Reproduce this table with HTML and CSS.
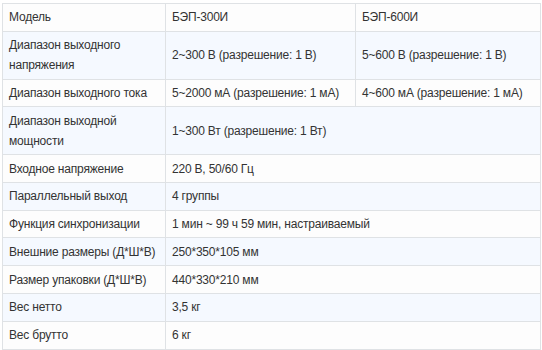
FILE: index.html
```html
<!DOCTYPE html>
<html lang="ru">
<head>
<meta charset="utf-8">
<link rel="stylesheet" href="styles.css">
</head>
<body>
<table class="spec">
  <colgroup>
    <col class="c1"><col class="c2"><col class="c3">
  </colgroup>
  <tbody>
    <tr><td>Модель</td><td>БЭП-300И</td><td>БЭП-600И</td></tr>
    <tr><td>Диапазон выходного напряжения</td><td>2~300 В (разрешение: 1 В)</td><td>5~600 В (разрешение: 1 В)</td></tr>
    <tr><td>Диапазон выходного тока</td><td>5~2000 мА (разрешение: 1 мА)</td><td>4~600 мА (разрешение: 1 мА)</td></tr>
    <tr><td>Диапазон выходной мощности</td><td colspan="2">1~300 Вт (разрешение: 1 Вт)</td></tr>
    <tr><td>Входное напряжение</td><td colspan="2">220 В, 50/60 Гц</td></tr>
    <tr><td>Параллельный выход</td><td colspan="2">4 группы</td></tr>
    <tr><td>Функция синхронизации</td><td colspan="2">1 мин ~ 99 ч 59 мин, настраиваемый</td></tr>
    <tr><td>Внешние размеры (Д*Ш*В)</td><td colspan="2">250*350*105 мм</td></tr>
    <tr><td>Размер упаковки (Д*Ш*В)</td><td colspan="2">440*330*210 мм</td></tr>
    <tr><td>Вес нетто</td><td colspan="2">3,5 кг</td></tr>
    <tr><td>Вес брутто</td><td colspan="2">6 кг</td></tr>
  </tbody>
</table>
</body>
</html>
```
FILE: styles.css
```css
html, body {
  margin: 0;
  padding: 0;
  background: #ffffff;
}
body {
  padding: 3px 2px 0 2px;
  font-family: "Liberation Sans", Arial, sans-serif;
  font-size: 12px;
  letter-spacing: -0.2px;
  color: #333333;
}
.spec {
  border-collapse: collapse;
  table-layout: fixed;
  width: 538px;
}
.c1 { width: 163px; }
.c2 { width: 190px; }
.c3 { width: 185px; }
.spec td {
  border: 1px solid #dfe2e5;
  padding: 3.4px 5px 3.4px 6px;
  line-height: 20px;
  vertical-align: middle;
  text-align: left;
}
.spec tr:nth-child(odd) td { background: #fdfdfd; }
.spec tr:nth-child(even) td { background: #f5f9ff; }
```
